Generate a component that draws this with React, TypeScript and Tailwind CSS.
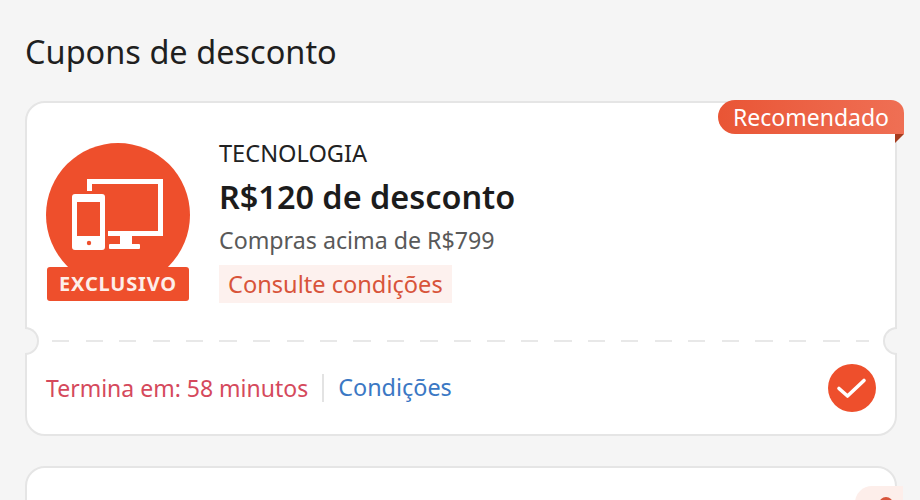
export default function App() {
  const Notch = ({ side }: { side: "l" | "r" }) => (
    <div
      className={
        side === "l"
          ? "absolute left-[-2px] top-[224px] h-[28px] w-[14px] rounded-r-full border-2 border-l-0 border-[#e5e5e5] bg-[#f5f5f5]"
          : "absolute right-[-2px] top-[224px] h-[28px] w-[14px] rounded-l-full border-2 border-r-0 border-[#e5e5e5] bg-[#f5f5f5]"
      }
    />
  );
  return (
    <div className="h-[500px] w-[920px] overflow-hidden bg-[#f5f5f5] pl-[25px] font-['Noto_Sans',sans-serif]">
      <h1 className="pt-[30px] text-[32.5px] leading-[44px] font-normal text-[#1f1f1f]">Cupons de desconto</h1>
      <div className="relative mt-[27px] h-[335px] w-[872px] rounded-[20px] border-2 border-[#e5e5e5] bg-white">
        <div className="flex pt-[39px] pl-[19px]">
          <div className="relative h-[160px] w-[145px] shrink-0">
            <svg viewBox="0 0 145 160" className="h-[160px] w-[145px]">
              <circle cx="72" cy="73" r="72" fill="#ee4f2c" />
              <rect x="1" y="125" width="142" height="34" rx="3" fill="#ee4f2c" />
              <path d="M41 37H117V94H62V89H112V42H46V49H41Z" fill="#fff" />
              <rect x="26" y="52" width="33" height="56" rx="3" fill="#fff" />
              <rect x="31" y="60" width="23" height="34" fill="#ee4f2c" />
              <circle cx="43" cy="101" r="2.2" fill="#ee4f2c" />
              <rect x="74" y="94" width="12" height="9" fill="#fff" />
              <rect x="63" y="102" width="31" height="5" rx="1" fill="#fff" />
            </svg>
            <span className="absolute left-0 top-[126px] flex h-[32px] w-[144px] items-center justify-center text-[20px] font-bold tracking-[0.8px] text-[#fdeee9]">EXCLUSIVO</span>
          </div>
          <div className="ml-[28px] -mt-[2px] flex flex-col items-start">
            <div className="text-[23.6px] leading-[26px] text-[#222]">TECNOLOGIA</div>
            <div className="mt-[9px] text-[32.4px] leading-[42px] font-semibold text-[#1c1c1c]">R$120 de desconto</div>
            <div className="mt-[6px] text-[23.2px] leading-[34px] text-[#595959]">Compras acima de R$799</div>
            <div className="mt-[8px] bg-[#fdf1ee] px-[9px] text-[23.6px] leading-[38px] text-[#d8543a]">Consulte condições</div>
          </div>
        </div>
        <div className="mt-[37px] ml-[25px] mr-[26px] h-[2px] bg-[repeating-linear-gradient(90deg,#e8e8e8_0,#e8e8e8_17px,transparent_17px,transparent_33.5px)]" />
        <div className="flex items-center justify-between pt-[22px] pr-[19px] pl-[19px]">
          <div className="flex items-center text-[23px]">
            <span className="text-[#d5495c]">Termina em: 58 minutos</span>
            <span className="mx-[14px] h-[28px] w-[2px] bg-[#e3e3e3]" />
            <span className="text-[23.4px] text-[#3b78c4]">Condições</span>
          </div>
          <div className="flex h-[48px] w-[48px] items-center justify-center rounded-full bg-[#ee4f2c]">
            <svg viewBox="0 0 48 48" className="h-[48px] w-[48px]">
              <path d="M11 24.5l8.5 7.5L36 16.5" fill="none" stroke="#fff" strokeWidth="3.6" strokeLinecap="round" strokeLinejoin="round" />
            </svg>
          </div>
        </div>
        <Notch side="l" />
        <Notch side="r" />
        <div className="absolute right-[-9px] top-[-3px] flex h-[34px] w-[186px] items-center justify-center rounded-tl-[17px] rounded-tr-[13px] rounded-bl-[17px] bg-gradient-to-r from-[#e95535] to-[#ef6f54] text-[23px] text-white">Recomendado</div>
        <div className="absolute right-[-9px] top-[31px] h-0 w-0 border-t-[9px] border-r-[9px] border-t-[#a63c1f] border-r-transparent" />
      </div>
      <div className="relative mt-[30px] h-[100px] w-[872px] rounded-[20px] border-2 border-[#e5e5e5] bg-white">
        <div className="absolute right-[-8px] top-[18px] h-[40px] w-[48px] rounded-tl-[17px] bg-[#fdeeea]" />
        <div className="absolute right-[2px] top-[29px] h-[14px] w-[14px] rounded-full bg-[#d8543a]" />
      </div>
    </div>
  );
}
